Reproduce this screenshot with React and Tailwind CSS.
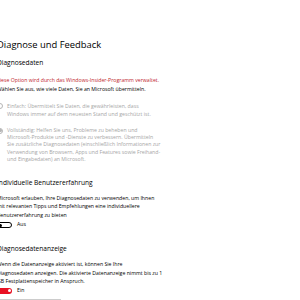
export default function App() {
  return (
    <div className="w-[300px] h-[300px] overflow-hidden bg-white text-black font-['Open_Sans',sans-serif]">
      <div className="ml-[-3px] pt-[38px]">
        <h1 className="text-[9.4px] leading-[14px] font-normal">Diagnose und Feedback</h1>
        <h2 className="mt-[6px] text-[6.6px] leading-[10px] font-medium">Diagnosedaten</h2>
        <p className="mt-[7.5px] text-[5.2px] leading-[8px] text-[#c0262e] ml-[-1px]">Diese Option wird durch das Windows-Insider-Programm verwaltet.</p>
        <p className="mt-[1px] text-[5.2px] leading-[8px]">Wählen Sie aus, wie viele Daten, Sie an Microsoft übermitteln.</p>

        <div className="mt-[9px] flex gap-[4px] text-[5.2px] leading-[8.5px] text-[#a6a6a6]">
          <div className="mt-[1.5px] w-[6px] h-[6px] shrink-0 rounded-full border border-[#b5b5b5]" />
          <p>Einfach: Übermittelt Sie Daten, die gewährleisten, dass<br />Windows immer auf dem neuesten Stand und geschützt ist.</p>
        </div>
        <div className="mt-[8px] flex gap-[4px] text-[5.2px] leading-[7.4px] text-[#a6a6a6]">
          <div className="mt-[1px] w-[6px] h-[6px] shrink-0 rounded-full border border-[#b5b5b5] flex items-center justify-center">
            <div className="w-[3px] h-[3px] rounded-full bg-[#b5b5b5]" />
          </div>
          <p>Vollständig: Helfen Sie uns, Probleme zu beheben und<br />Microsoft-Produkte und -Dienste zu verbessern. Übermitteln<br />Sie zusätzliche Diagnosedaten (einschließlich Informationen zur<br />Verwendung von Browsern, Apps und Features sowie Freihand-<br />und Eingabedaten) an Microsoft.</p>
        </div>

        <h2 className="mt-[14px] text-[6.6px] leading-[10px] font-medium">Individuelle Benutzererfahrung</h2>
        <p className="mt-[6px] text-[5.2px] leading-[8.5px]">Microsoft erlauben, Ihre Diagnosedaten zu verwenden, um Ihnen<br />mit relevanten Tipps und Empfehlungen eine individuellere<br />Benutzererfahrung zu bieten</p>
        <div className="mt-[2px] h-[8px] flex items-center gap-[5px] text-[5.2px]">
          <div className="w-[15px] h-[6px] rounded-full border border-black flex items-center px-[1px]">
            <div className="w-[3px] h-[3px] rounded-full bg-black" />
          </div>
          <span>Aus</span>
        </div>

        <h2 className="mt-[15px] text-[6.6px] leading-[10px] font-medium">Diagnosedatenanzeige</h2>
        <p className="mt-[6px] text-[5.2px] leading-[8.5px]">Wenn die Datenanzeige aktiviert ist, können Sie Ihre<br />Diagnosedaten anzeigen. Die aktivierte Datenanzeige nimmt bis zu 1<br />GB Festplattenspeicher in Anspruch.</p>
        <div className="mt-[1px] h-[8px] flex items-center gap-[5px] text-[5.2px]">
          <div className="w-[15px] h-[6px] rounded-full bg-[#e81123] flex items-center justify-end px-[1.5px]">
            <div className="w-[3px] h-[3px] rounded-full bg-white" />
          </div>
          <span>Ein</span>
        </div>
        <div className="mt-[4px] w-[64px] h-[12px] bg-[#cccccc]" />
      </div>
    </div>
  );
}
